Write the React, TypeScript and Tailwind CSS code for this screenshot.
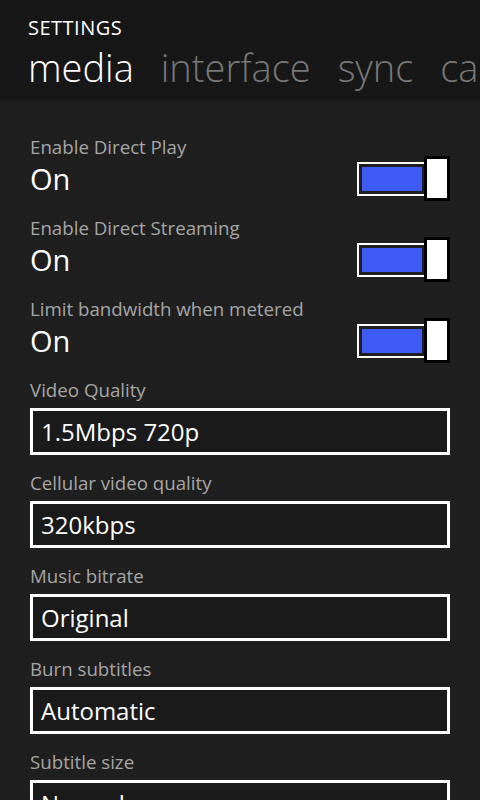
import React from "react";

const toggles = [
  { label: "Enable Direct Play", value: "On" },
  { label: "Enable Direct Streaming", value: "On" },
  { label: "Limit bandwidth when metered", value: "On" },
];

const pickers = [
  { label: "Video Quality", value: "1.5Mbps 720p" },
  { label: "Cellular video quality", value: "320kbps" },
  { label: "Music bitrate", value: "Original" },
  { label: "Burn subtitles", value: "Automatic" },
  { label: "Subtitle size", value: "Normal" },
];

function Toggle() {
  return (
    <div className="relative flex items-center w-[93px] h-[45px]">
      {/* track */}
      <div className="w-[70px] h-[34px] border-2 border-white p-[3px] bg-[#1f1f1f]">
        <div className="w-full h-full bg-[#3d5cf5]" />
      </div>
      {/* thumb */}
      <div className="absolute right-0 top-0 w-[26px] h-[45px] border-[3px] border-black bg-white" />
    </div>
  );
}

export default function App() {
  return (
    <div
      className="w-[480px] h-[800px] overflow-hidden bg-[#1f1f1f] text-white"
      style={{ fontFamily: '"Open Sans", "Noto Sans", sans-serif' }}
    >
      {/* Pivot header */}
      <div className="h-[101px] bg-[#171717] pl-[28px] pt-[14px] overflow-hidden">
        <div className="text-[20px] leading-[27px] tracking-[0.5px]">SETTINGS</div>
        <div className="flex gap-[27px] whitespace-nowrap text-[38px] leading-[52px] font-light">
          <span className="text-white">media</span>
          <span className="text-[#777]">interface</span>
          <span className="text-[#777]">sync</span>
          <span className="text-[#777]">cache</span>
        </div>
      </div>

      <div className="pl-[30px] pr-[30px] pt-[34px]">
        {toggles.map((t) => (
          <div key={t.label} className="h-[81px] flex justify-between items-start">
            <div>
              <div className="text-[18.7px] leading-[24px] text-[#a6a6a6]">{t.label}</div>
              <div className="text-[29px] leading-[40px]">{t.value}</div>
            </div>
            <div className="mt-[21px]">
              <Toggle />
            </div>
          </div>
        ))}

        {pickers.map((p) => (
          <div key={p.label} className="h-[93px]">
            <div className="text-[18.7px] leading-[24px] text-[#a6a6a6]">{p.label}</div>
            <div className="mt-[6px] h-[47px] border-[3px] border-white bg-[#1a1a1a] px-[8px] flex items-center">
              <span className="text-[24px] leading-[30px]">{p.value}</span>
            </div>
          </div>
        ))}
      </div>
    </div>
  );
}
